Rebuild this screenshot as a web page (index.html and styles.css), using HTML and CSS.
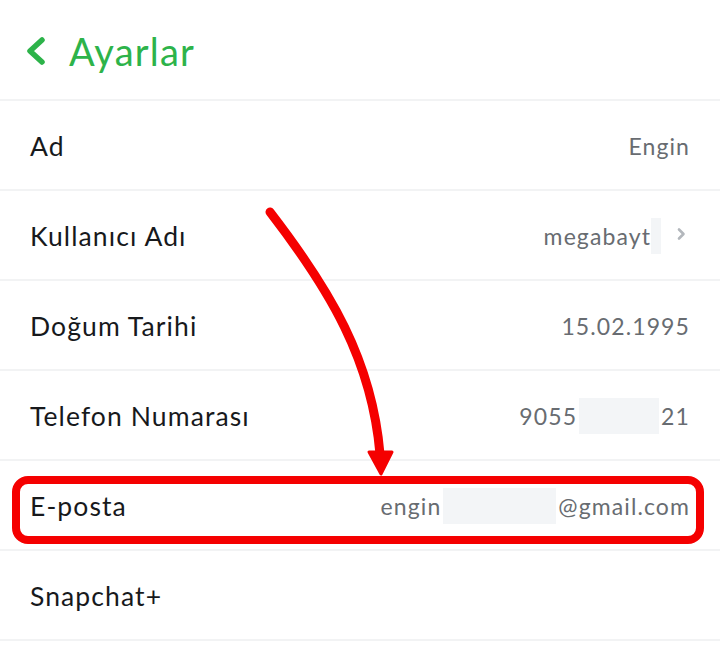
FILE: index.html
```html
<!DOCTYPE html>
<html lang="tr">
<head>
<meta charset="utf-8">
<link rel="stylesheet" href="styles.css">
</head>
<body>
<div class="screen">
  <header class="header">
    <svg class="back" width="22" height="28" viewBox="0 0 22 28"><path d="M17 3 L5 14 L17 25" fill="none" stroke="#2db34a" stroke-width="5.5" stroke-linecap="round" stroke-linejoin="round"/></svg>
    <h1 class="title">Ayarlar</h1>
  </header>
  <div class="list">
    <div class="row"><span class="label">Ad</span><span class="value">Engin</span></div>
    <div class="row"><span class="label">Kullanıcı Adı</span><span class="value">megabayt<span class="mask mask-user"></span><svg class="chev" width="10" height="14" viewBox="0 0 10 14"><path d="M3 2.5 L7.5 7 L3 11.5" fill="none" stroke="#b3b7bc" stroke-width="2.6" stroke-linecap="round" stroke-linejoin="round"/></svg></span></div>
    <div class="row"><span class="label">Doğum Tarihi</span><span class="value">15.02.1995</span></div>
    <div class="row"><span class="label">Telefon Numarası</span><span class="value">9055<span class="mask mask-phone"></span>21</span></div>
    <div class="row"><span class="label">E-posta</span><span class="value">engin<span class="mask mask-mail"></span>@gmail.com</span></div>
    <div class="row"><span class="label">Snapchat+</span></div>
  </div>
  <div class="highlight"></div>
  <svg class="arrow" width="720" height="659" viewBox="0 0 720 659">
    <path d="M270 212 C 330 290, 372 360, 380 454" fill="none" stroke="#f50000" stroke-width="9" stroke-linecap="round"/>
    <path d="M369 452 L392 452 L381 474 Z" fill="#f50000" stroke="#f50000" stroke-width="3" stroke-linejoin="round"/>
  </svg>
</div>
</body>
</html>
```
FILE: styles.css
```css
* { box-sizing: border-box; }
html, body { margin: 0; padding: 0; background: #fff; }
body { font-family: Lato, "Noto Sans", sans-serif; }
.screen { position: relative; width: 720px; height: 659px; overflow: hidden; }
.header { height: 101px; display: flex; align-items: center; padding-left: 25px; padding-top: 2px; border-bottom: 2px solid #f2f3f4; }
.back { display: block; margin-right: 22px; }
.title { margin: 0; font-weight: 400; font-size: 38px; color: #2db34a; letter-spacing: 1.2px; }
.row { height: 90px; display: flex; align-items: center; justify-content: space-between; padding: 2px 30px 0; border-bottom: 2px solid #f2f3f4; }
.label { font-size: 26.5px; color: #17191c; letter-spacing: 1.1px; }
.value { font-size: 23px; color: #686c71; display: flex; align-items: center; letter-spacing: 1.1px; }
.mask { display: inline-block; background: #f3f5f7; height: 36px; }
.mask-user { width: 10px; margin-left: 0; }
.mask-phone { width: 80px; margin: 0 2px; }
.mask-mail { width: 113px; margin: 0 2px; }
.chev { display: block; margin-left: 15px; margin-right: 4px; margin-top: -4px; }
.highlight { position: absolute; left: 12px; top: 476px; width: 692px; height: 68px; border: 8px solid #f50000; border-radius: 16px; }
.arrow { position: absolute; left: 0; top: 0; }
```
